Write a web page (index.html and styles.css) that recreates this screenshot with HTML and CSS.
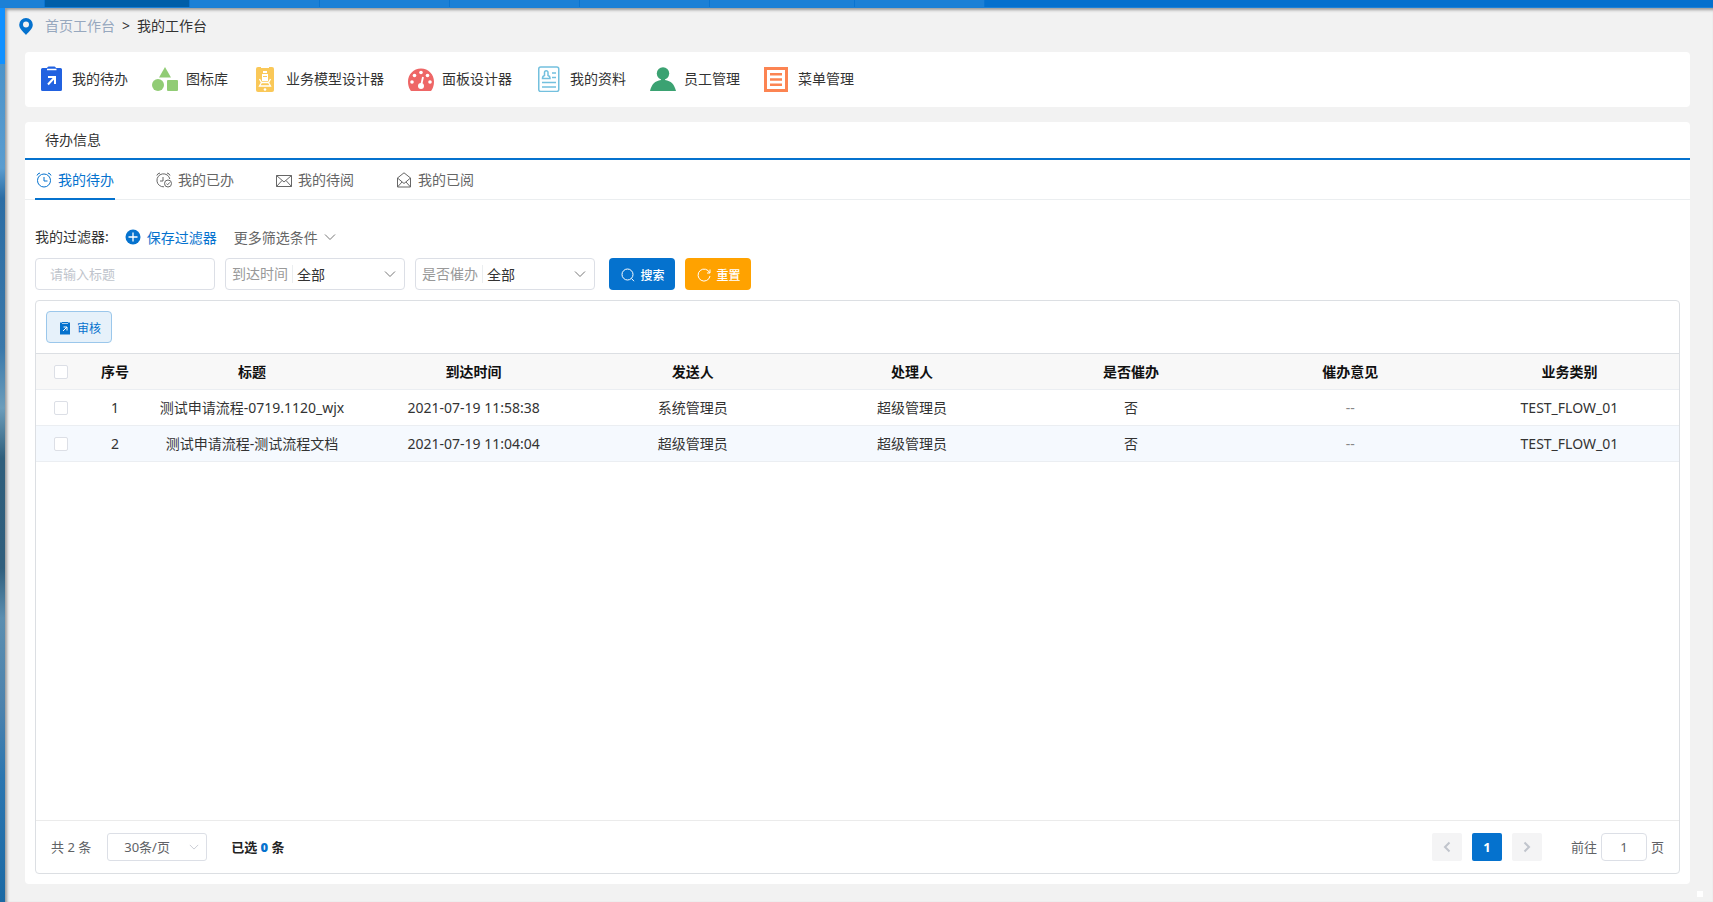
FILE: index.html
```html
<!DOCTYPE html>
<html lang="zh-CN">
<head>
    <meta charset="UTF-8">
    <meta name="viewport" content="width=device-width, initial-scale=1.0">
    <title>我的工作台</title>
    <link rel="stylesheet" href="styles.css">
</head>
<body>
    <div class="topbar">
        <span class="top-tab top-home"></span>
        <span class="top-tab active"></span>
        <span class="top-tab"></span>
        <span class="top-tab"></span>
        <span class="top-tab"></span>
        <span class="top-tab"></span>
        <span class="top-tab wide"></span>
        <span class="top-tab"></span>
    </div>
    <div class="layout">
        <aside class="side"></aside>
        <main class="main">
            <nav class="breadcrumb">
                <svg width="14" height="17" viewBox="0 0 14 17"><path fill="#0572ce" fill-rule="evenodd" d="M7 0a6.800 6.800 0 0 0-6.800 6.800C.2 11 4.500 14 7 17c2.500-3 6.800-6 6.800-10.200A6.800 6.800 0 0 0 7 0zm0 3.600a3 3 0 1 1 0 6 3 3 0 0 1 0-6z"/></svg>
                <a href="#">首页工作台</a>
                <span>&gt;</span>
                <span>我的工作台</span>
            </nav>

            <nav class="card shortcuts">
                <a href="#">
                    <svg width="26" height="26" viewBox="0 0 26 26"><path fill="#2161e0" d="M5 2h4q.5-1.500 1.500-1.500h6Q17.500.5 18 2h4.500A1.500 1.500 0 0 1 24 3.500v20a1.500 1.500 0 0 1-1.500 1.500h-18A1.500 1.500 0 0 1 3 23.500v-20A1.500 1.500 0 0 1 4.500 2z"/><path stroke="#fff" stroke-width="1.500" fill="none" d="M9 3.500h9.500"/><path stroke="#fff" stroke-width="2" fill="none" d="M10 11h7v7M17 11l-7 7.500"/></svg>
                    <span>我的待办</span>
                </a>
                <a href="#">
                    <svg width="26" height="26" viewBox="0 0 26 26"><g fill="#91cc75"><path d="M13 1l6 10.500H7z"/><circle cx="6" cy="19" r="6"/><rect x="15" y="14" width="11" height="11" rx="1"/></g></svg>
                    <span>图标库</span>
                </a>
                <a href="#">
                    <svg width="26" height="26" viewBox="0 0 26 26"><rect x="4" y="1" width="18" height="25" rx="2" fill="#fac858"/><path stroke="#fff" d="M9 1.500h8"/><path fill="#fff" d="M11 5h4v3h1v7h-6V8h1z"/><path stroke="#fac858" d="M11 7.500h4M11 10.500h4"/><path stroke="#fff" stroke-width="1.300" d="M7.500 13l2 3.500h7l2-3.500M9.500 16.500L7.500 20h11l-2-3.500"/><circle cx="13" cy="23.500" r="1.300" fill="#fff"/></svg>
                    <span>业务模型设计器</span>
                </a>
                <a href="#">
                    <svg width="26" height="26" viewBox="0 0 26 26"><path fill="#ee6666" d="M13 2.500c7.500 0 13 6 13 13 0 3.500-.8 6-2 8-.5 1-1 1.500-2 1.500H4c-1 0-1.500-.5-2-1.500-1.200-2-2-4.500-2-8 0-7 5.500-13 13-13z"/><g fill="#fff"><circle cx="13" cy="6.500" r="1.800"/><circle cx="6.500" cy="9.500" r="1.800"/><circle cx="19.500" cy="9.500" r="1.800"/><circle cx="4" cy="16" r="1.800"/><circle cx="22" cy="16" r="1.800"/><circle cx="13" cy="20" r="3"/></g><path stroke="#fff" stroke-width="1.800" d="M13 20l2-9"/></svg>
                    <span>面板设计器</span>
                </a>
                <a href="#">
                    <svg width="26" height="26" viewBox="0 0 26 26"><g fill="none" stroke="#73c0de" stroke-width="1.500"><rect x="2.750" y="1" width="20" height="24.500" rx="2"/><path d="M16 7h4M16 11.500h4M6 16.500h14M6 21h14M6.500 12.500q0-2.500 2-3v-3a1.600 1.600 0 0 1 3.500 0v3q2 .5 2 3z"/></g></svg>
                    <span>我的资料</span>
                </a>
                <a href="#">
                    <svg width="26" height="26" viewBox="0 0 26 26"><g fill="#3ba272"><circle cx="13" cy="7.500" r="6.200"/><path d="M11 12h4v2c6 .8 9.500 4.500 11 11H0c1.500-6.500 5-10.200 11-11z"/></g></svg>
                    <span>员工管理</span>
                </a>
                <a href="#">
                    <svg width="26" height="26" viewBox="0 0 26 26"><rect x="1.500" y="2.500" width="21" height="22" fill="none" stroke="#fc8452" stroke-width="3"/><path stroke="#fc8452" stroke-width="2.400" d="M6 8.200h12M6 13.500h12M6 18.800h12"/></svg>
                    <span>菜单管理</span>
                </a>
            </nav>

            <section class="card todo">
                <h1 class="todo-title">待办信息</h1>
                <div class="tabs">
                    <a href="#" class="tab active">
                        <svg width="16" height="16" viewBox="0 0 16 16"><circle cx="8" cy="8.500" r="6.500"/><path d="M8 5v4h3.500M1 3.500Q1.500 1.500 4 1M15 3.500q-.5-2-3-2.500"/></svg>
                        我的待办
                    </a>
                    <a href="#" class="tab">
                        <svg width="16" height="16" viewBox="0 0 16 16"><path d="M8 14.800A6.500 6.500 0 1 1 13.800 7M7 5v4H4M.8 3.500Q1.300 1.500 4 1M14 3.500q-.5-2-3-2.500"/><circle cx="12" cy="11.500" r="3.500"/><path d="M10.300 11.500l1.300 1.300 2.200-2.400"/></svg>
                        我的已办
                    </a>
                    <a href="#" class="tab">
                        <svg width="16" height="16" viewBox="0 0 16 16"><path d="M.5 3.500h15v11H.5zM.5 3.500L8 10l7.500-6.500M.5 14.500l5.500-6M15.500 14.500l-5.500-6"/></svg>
                        我的待阅
                    </a>
                    <a href="#" class="tab">
                        <svg width="16" height="16" viewBox="0 0 16 16"><path d="M1.500 6L8 .8 14.500 6v9h-13zM1.500 6L8 11.500 14.500 6M1.500 15L6 10M14.500 15L10 10"/></svg>
                        我的已阅
                    </a>
                </div>

                <div class="content">
                    <div class="filter-line">
                        <span class="filter-name">我的过滤器:</span>
                        <button type="button" class="link-btn save">
                            <svg width="16" height="16" viewBox="0 0 16 16"><circle cx="8" cy="8" r="7.500" fill="#0572ce"/><path stroke="#fff" stroke-width="1.300" d="M3.500 8h9M8 3.500v9"/></svg>
                            保存过滤器
                        </button>
                        <button type="button" class="link-btn more">
                            更多筛选条件
                            <svg class="chevron" width="12" height="12" viewBox="0 0 12 12"><path d="M1 3.500l5 5 5-5"/></svg>
                        </button>
                    </div>

                    <form class="search">
                        <input class="field title-input" type="text" aria-label="标题" placeholder="请输入标题">
                        <div class="field select-field">
                            <label for="arrive">到达时间</label>
                            <select id="arrive"><option>全部</option></select>
                            <svg class="chevron" width="12" height="12" viewBox="0 0 12 12"><path d="M1 3.500l5 5 5-5"/></svg>
                        </div>
                        <div class="field select-field">
                            <label for="urge">是否催办</label>
                            <select id="urge"><option>全部</option></select>
                            <svg class="chevron" width="12" height="12" viewBox="0 0 12 12"><path d="M1 3.500l5 5 5-5"/></svg>
                        </div>
                        <button type="button" class="btn primary">
                            <svg width="14" height="14" viewBox="0 0 14 14"><circle cx="6.500" cy="6.500" r="5.500"/><path d="M10.500 10.500l2.500 2.700"/></svg>
                            <span>搜索</span>
                        </button>
                        <button type="reset" class="btn warning">
                            <svg width="14" height="14" viewBox="0 0 14 14"><path d="M12.700 5A6 6 0 1 0 13 8M13 1.500V5h-3"/></svg>
                            <span>重置</span>
                        </button>
                    </form>

                    <div class="grid-box">
                        <div class="toolbar">
                            <button type="button" class="btn plain">
                                <svg width="12" height="14" viewBox="0 0 12 14"><path fill="#0572ce" stroke="none" d="M1 1.500h2V1h6v.5h2v12H1z"/><path stroke="#a8cdee" d="M3 2.500h6"/><path stroke="#fff" d="M4.500 6h3.500v3.500M8 6l-4 4"/></svg>
                                <span>审核</span>
                            </button>
                        </div>
                        <table class="grid">
                            <thead>
                                <tr>
                                    <th class="col-check"><input type="checkbox" aria-label="全选"></th>
                                    <th class="col-index">序号</th>
                                    <th class="col-title">标题</th>
                                    <th>到达时间</th>
                                    <th>发送人</th>
                                    <th>处理人</th>
                                    <th>是否催办</th>
                                    <th>催办意见</th>
                                    <th>业务类别</th>
                                </tr>
                            </thead>
                            <tbody>
                                <tr>
                                    <td class="col-check"><input type="checkbox" aria-label="选择 1"></td>
                                    <td>1</td>
                                    <td>测试申请流程-0719.1120_wjx</td>
                                    <td>2021-07-19 11:58:38</td>
                                    <td>系统管理员</td>
                                    <td>超级管理员</td>
                                    <td>否</td>
                                    <td class="empty">--</td>
                                    <td>TEST_FLOW_01</td>
                                </tr>
                                <tr>
                                    <td class="col-check"><input type="checkbox" aria-label="选择 2"></td>
                                    <td>2</td>
                                    <td>测试申请流程-测试流程文档</td>
                                    <td>2021-07-19 11:04:04</td>
                                    <td>超级管理员</td>
                                    <td>超级管理员</td>
                                    <td>否</td>
                                    <td class="empty">--</td>
                                    <td>TEST_FLOW_01</td>
                                </tr>
                            </tbody>
                        </table>
                        <div class="pager">
                            <span>共 2 条</span>
                            <div class="page-size">
                                <select aria-label="每页条数"><option>30条/页</option></select>
                                <svg class="chevron" width="10" height="10" viewBox="0 0 12 12"><path d="M1 3.500l5 5 5-5"/></svg>
                            </div>
                            <span class="selected">已选 <b>0</b> 条</span>
                            <div class="pages">
                                <button type="button" class="page" aria-label="上一页" disabled><svg width="8" height="12" viewBox="0 0 8 12"><path d="M6.500 1.500L2 6l4.500 4.500"/></svg></button>
                                <button type="button" class="page current">1</button>
                                <button type="button" class="page" aria-label="下一页" disabled><svg width="8" height="12" viewBox="0 0 8 12"><path d="M1.500 1.500L6 6l-4.500 4.500"/></svg></button>
                            </div>
                            <label class="jump">前往 <input type="text" value="1"> 页</label>
                        </div>
                    </div>
                </div>
            </section>
            <span class="corner"></span>
        </main>
    </div>
</body>
</html>
```
FILE: styles.css
```css
* {
    box-sizing: border-box;
}
body {
    margin: 0;
    min-height: 100vh;
    display: flex;
    flex-direction: column;
    background-color: #f2f2f2;
    color: #333;
    font-family: "Noto Sans", "Noto Sans CJK SC", sans-serif;
    font-size: 14px;
    line-height: 20px;
}
button, input, select {
    font-family: inherit;
    font-size: 14px;
    color: inherit;
}
button {
    cursor: pointer;
}
a {
    color: inherit;
    text-decoration: none;
}
svg {
    flex: none;
    fill: none;
}

/* top bar */
.topbar {
    display: flex;
    height: 8px;
    background-color: #0470ce;
    border-bottom: 1px solid #1c80d6;
}
.top-tab {
    width: 130px;
    background-color: #1c80d6;
    border-right: 1px solid #0b74d0;
}
.top-home {
    width: 45px;
}
.top-tab.active {
    width: 145px;
    background-color: #005ea8;
}
.top-tab.wide {
    width: 145px;
}

.layout {
    flex: 1;
    display: flex;
}
.side {
    width: 5px;
    background: linear-gradient(#1090ff 56px, #4b93ca 56px, #5a9ccf 160px, #2c6da4 190px, #3a78aa 340px, #6c9dbb 400px, #2f5f7c 450px, #305f7d 560px, #5b8eb0 610px, #4c82ad 700px, #2b76b0 770px, #1b69a4 100%);
}
.main {
    flex: 1;
    min-width: 0;
    display: flex;
    flex-direction: column;
    position: relative;
    padding: 0 23px 18px 20px;
    box-shadow: inset 2px 2px 3px #999;
}
.card {
    background-color: #fff;
    border-radius: 4px;
}

.breadcrumb {
    display: flex;
    align-items: center;
    height: 36px;
    margin: 0 0 8px -6px;
}
.breadcrumb a {
    margin-left: 12px;
    color: #97a8be;
}
.breadcrumb span {
    margin-left: 7px;
}

.shortcuts {
    display: flex;
    align-items: center;
    gap: 24px;
    height: 55px;
    padding: 0 0 2px 13px;
}
.shortcuts a {
    display: flex;
    align-items: center;
    gap: 8px;
}

.todo {
    flex: 1;
    display: flex;
    flex-direction: column;
    margin-top: 15px;
}
.todo-title {
    margin: 0;
    padding: 8px 20px;
    border-bottom: 2px solid #0572ce;
    font-size: 14px;
    font-weight: normal;
}
.tabs {
    display: flex;
    gap: 40px;
    height: 40px;
    padding-left: 10px;
    border-bottom: 1px solid #ebeef0;
}
.tab {
    display: flex;
    align-items: center;
    gap: 6px;
    width: 80px;
    height: 40px;
    padding: 2px 0 0 1px;
    white-space: nowrap;
    color: #666;
    border-bottom: 2px solid transparent;
}
.tab svg {
    stroke: #666;
}
.tab.active {
    color: #0572ce;
    border-color: #0572ce;
}
.tab.active svg {
    stroke: #0572ce;
}

.content {
    flex: 1;
    display: flex;
    flex-direction: column;
    padding: 26px 10px 10px;
}

/* filters */
.filter-line {
    display: flex;
    align-items: center;
    height: 22px;
}
.link-btn {
    display: flex;
    align-items: center;
    gap: 6px;
    padding: 0;
    border: none;
    background: none;
    color: #666;
}
.save {
    margin: 0 17px 0 16px;
    color: #0572ce;
}
.chevron {
    stroke: #777;
}
.search {
    display: flex;
    gap: 10px;
    margin: 10px 0;
}
.field {
    width: 180px;
    height: 32px;
    border: 1px solid #dcdfe6;
    border-radius: 4px;
    background-color: #fff;
}
.title-input {
    padding: 0 14px;
    font-size: 13px;
}
.title-input::placeholder {
    color: #c0c4cc;
}
.select-field {
    position: relative;
    display: flex;
    align-items: center;
    padding-left: 6px;
}
.select-field label {
    padding-right: 4px;
    border-right: 1px solid #ebeef0;
    line-height: 18px;
    color: #999;
}
.select-field select {
    flex: 1;
    height: 30px;
    padding: 0 4px;
    border: none;
    background: none;
    appearance: none;
}
.select-field .chevron {
    position: absolute;
    right: 8px;
    pointer-events: none;
}

.btn {
    display: flex;
    align-items: center;
    justify-content: center;
    gap: 5px;
    width: 66px;
    height: 32px;
    padding: 2px 0 0 2px;
    border: none;
    border-radius: 4px;
    font-size: 12px;
    color: #fff;
}
.btn svg {
    stroke: #fff;
}
.primary {
    margin-left: 4px;
    background-color: #0572ce;
    font-weight: 500;
}
.warning {
    background-color: #ffa200;
    font-weight: 500;
}
.plain {
    gap: 6px;
    border: 1px solid #9bc7eb;
    background-color: #e6f1fa;
    color: #0572ce;
}

/* table */
.grid-box {
    flex: 1;
    display: flex;
    flex-direction: column;
    border: 1px solid #dcdfe3;
    border-radius: 4px;
}
.toolbar {
    padding: 10px;
    border-bottom: 1px solid #dcdfe3;
}
.grid {
    width: 100%;
    table-layout: fixed;
    border-spacing: 0;
    text-align: center;
}
.grid th, .grid td {
    height: 36px;
    padding: 0;
    border-bottom: 1px solid #ebeef2;
}
.grid th {
    background-color: #f8f8f8;
    color: #111;
    font-weight: bold;
}
.grid tbody tr:nth-child(even) {
    background-color: #f5f9fe;
}
.grid .col-check {
    width: 54px;
    padding-left: 18px;
    text-align: left;
}
.col-index {
    width: 50px;
}
.col-title {
    width: 224px;
}
.grid .empty {
    color: #888;
}
.grid input {
    display: block;
    width: 14px;
    height: 14px;
    margin: 0;
    appearance: none;
    border: 1px solid #dcdfe6;
    border-radius: 2px;
    background-color: #fff;
}

/* pagination */
.pager {
    display: flex;
    align-items: center;
    height: 53px;
    margin-top: auto;
    padding: 0 15px;
    border-top: 1px solid #ebebeb;
    font-size: 13px;
    color: #606266;
}
.page-size {
    position: relative;
    display: flex;
    align-items: center;
    margin: 0 24px 0 16px;
}
.page-size select {
    width: 100px;
    height: 28px;
    padding: 0 16px;
    border: 1px solid #dcdfe6;
    border-radius: 3px;
    background: none;
    appearance: none;
    font-size: 13px;
}
.page-size .chevron {
    position: absolute;
    right: 8px;
    stroke: #c0c4cc;
    pointer-events: none;
}
.selected {
    color: #222;
    font-weight: bold;
}
.selected b {
    color: #0572ce;
}
.pages {
    display: flex;
    gap: 10px;
    margin-left: auto;
}
.page {
    display: flex;
    align-items: center;
    justify-content: center;
    width: 30px;
    height: 28px;
    padding: 0;
    border: none;
    border-radius: 2px;
    background-color: #f4f4f5;
    font-size: 13px;
    font-weight: bold;
}
.page svg {
    stroke: #c0c4cc;
    stroke-width: 2;
}
.page.current {
    background-color: #0572ce;
    color: #fff;
}
.jump {
    display: flex;
    align-items: center;
    gap: 4px;
    margin-left: 29px;
}
.jump input {
    width: 46px;
    height: 28px;
    padding: 0;
    border: 1px solid #dcdfe6;
    border-radius: 4px;
    text-align: center;
    font-size: 13px;
}

/* small square in the page corner */
.corner {
    position: absolute;
    right: 10px;
    bottom: 5px;
    width: 6px;
    height: 6px;
    background-color: #fff;
}
```
